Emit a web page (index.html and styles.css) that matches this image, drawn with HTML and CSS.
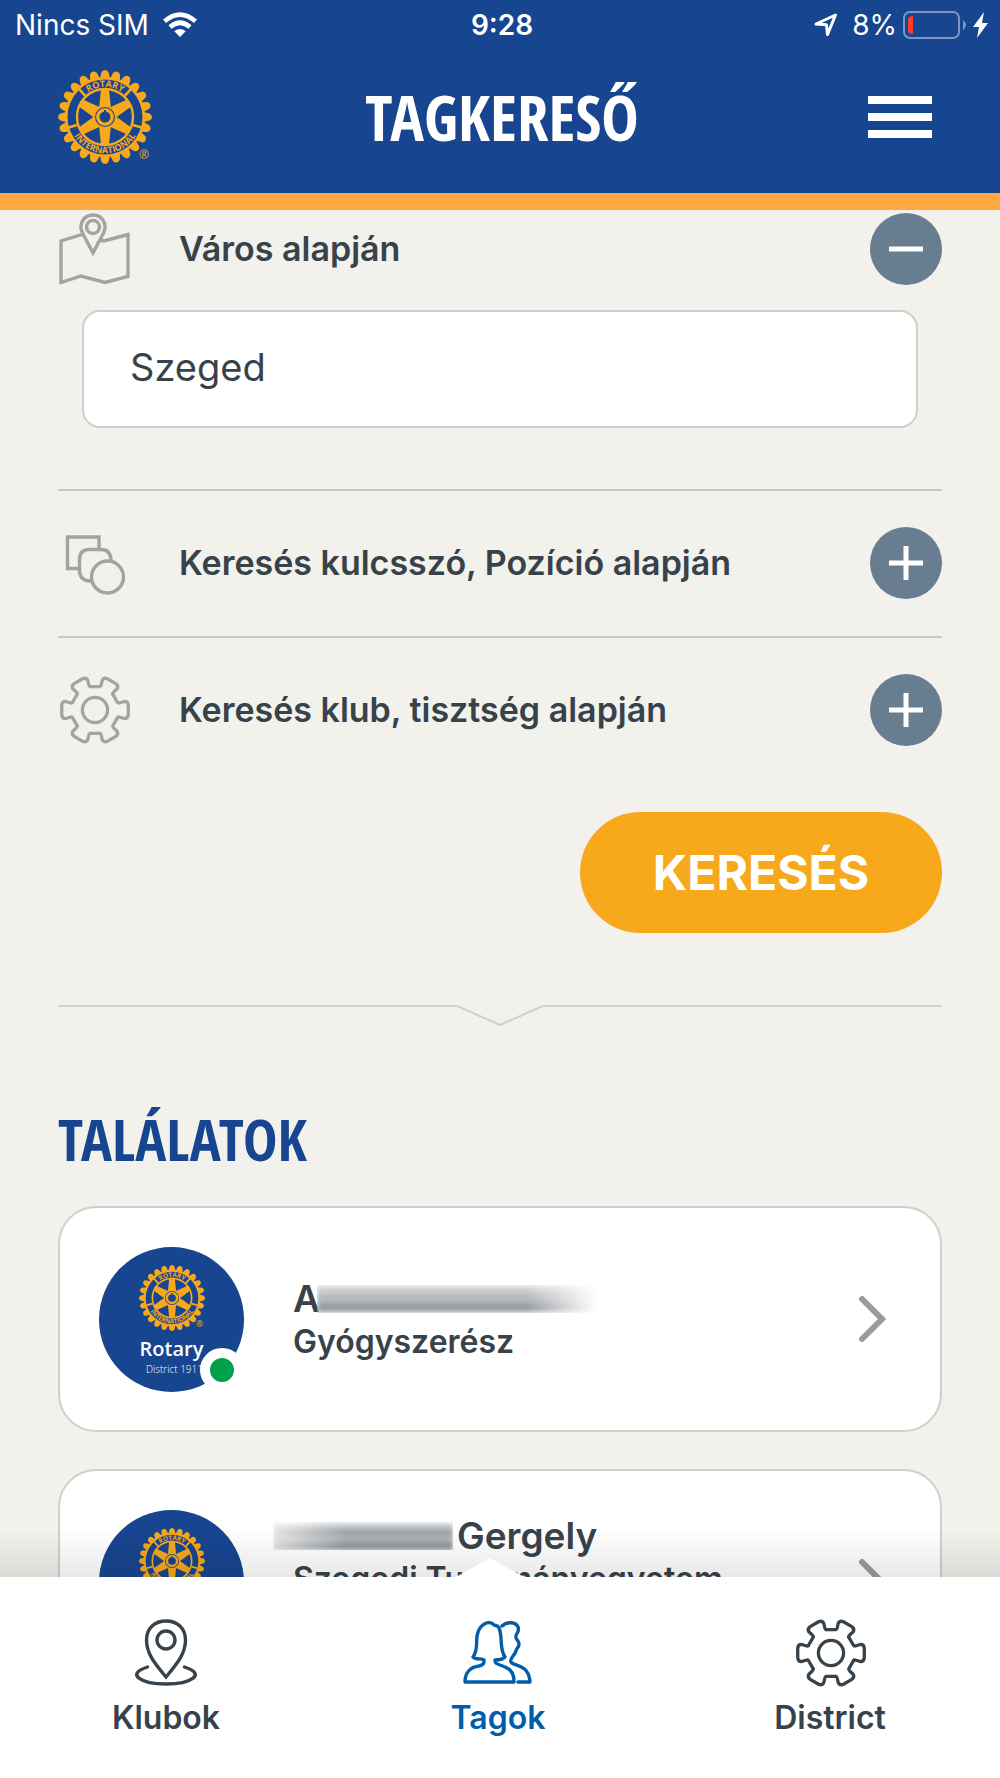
FILE: index.html
```html
<!DOCTYPE html>
<html lang="hu">
<head>
    <meta charset="UTF-8">
    <meta name="viewport" content="width=device-width, initial-scale=1.0">
    <title>Tagkereső</title>
    <link rel="stylesheet" href="styles.css">
</head>
<body>
    <svg class="sprite" aria-hidden="true">
        <defs>
            <path id="tooth" d="M-5.2 -38 L-3.6 -44.5 Q-2.5 -47 0 -47 Q2.5 -47 3.6 -44.5 L5.2 -38 Z"/>
            <g id="teeth">
                <use href="#tooth"/>
                <use href="#tooth" transform="rotate(15)"/>
                <use href="#tooth" transform="rotate(30)"/>
                <use href="#tooth" transform="rotate(45)"/>
            </g>
            <path id="spoke" d="M-6 -8 L-4 -28 H4 L6 -8 Z"/>
            <path id="arc-top" d="M-30 0 A30 30 0 0 1 30 0"/>
            <path id="arc-bottom" d="M-34.5 -10 A36 36 0 1 0 34.5 -10"/>
            <path id="gear-part" d="M18.3 -16.3 L23.3 -7.7 Q24 -6.8 26 -7.5 L30 -8.8 Q34 -9 34.3 -5 V5 Q34 9 30 8.8 L26 7.5 Q24 6.8 23.3 7.7"/>
        </defs>

        <symbol id="wheel" viewBox="-47 -47 94 94">
            <g fill="#f7a81b">
                <use href="#teeth"/>
                <use href="#teeth" transform="rotate(60)"/>
                <use href="#teeth" transform="rotate(120)"/>
                <use href="#teeth" transform="rotate(180)"/>
                <use href="#teeth" transform="rotate(240)"/>
                <use href="#teeth" transform="rotate(300)"/>
                <circle r="40"/>
            </g>
            <circle r="37.5" fill="#17458f"/>
            <circle r="28" fill="none" stroke="#f7a81b" stroke-width="2.4"/>
            <g fill="#f7a81b">
                <use href="#spoke"/>
                <use href="#spoke" transform="rotate(60)"/>
                <use href="#spoke" transform="rotate(120)"/>
                <use href="#spoke" transform="rotate(180)"/>
                <use href="#spoke" transform="rotate(240)"/>
                <use href="#spoke" transform="rotate(300)"/>
            </g>
            <circle r="10" fill="#17458f"/>
            <circle r="7.2" fill="none" stroke="#f7a81b" stroke-width="3.4"/>
            <rect x="-1" y="-7" width="2" height="2" fill="#17458f"/>
            <g stroke="#f7a81b" stroke-width="2.6">
                <path d="M0 -29 V-38" transform="rotate(43)"/>
                <path d="M0 -29 V-38" transform="rotate(-43)"/>
                <path d="M0 -29 V-38" transform="rotate(106)"/>
                <path d="M0 -29 V-38" transform="rotate(-106)"/>
            </g>
            <g class="wheel-text">
                <text><textPath href="#arc-top" startOffset="50%">ROTARY</textPath></text>
                <text><textPath href="#arc-bottom" startOffset="50%">INTERNATIONAL</textPath></text>
                <text class="wheel-reg" x="39" y="42">®</text>
            </g>
        </symbol>

        <symbol id="gear" viewBox="0 0 72 72">
            <g transform="translate(37 36) scale(0.97)" fill="none" stroke="currentColor" stroke-width="3.4" stroke-linecap="round" stroke-linejoin="round">
                <use href="#gear-part"/>
                <use href="#gear-part" transform="rotate(60)"/>
                <use href="#gear-part" transform="rotate(120)"/>
                <use href="#gear-part" transform="rotate(180)"/>
                <use href="#gear-part" transform="rotate(240)"/>
                <use href="#gear-part" transform="rotate(300)"/>
                <circle r="13"/>
            </g>
        </symbol>
    </svg>

    <header class="header">
        <div class="status">
            <div class="status-left">
                <span>Nincs SIM</span>
                <svg width="34" height="26" viewBox="0 0 34 26" fill="none" stroke="#fff" stroke-width="4.6">
                    <path d="M1.5 9.3 Q17 -4 32.5 9.3"/>
                    <path d="M7 15 Q17 6.5 27 15"/>
                    <path d="M17 25 L11.3 19.2 Q17 14.6 22.7 19.2 Z" fill="#fff" stroke="none"/>
                </svg>
            </div>
            <span class="clock">9:28</span>
            <div class="status-right">
                <svg width="24" height="24" viewBox="0 0 24 24" fill="none" stroke="#fff" stroke-width="3" stroke-linejoin="round">
                    <path d="M2 11 L21.5 2 L13.5 21.5 L12.5 11.8 Z"/>
                </svg>
                <span class="percent">8%</span>
                <svg class="battery" width="64" height="28" viewBox="0 0 64 28">
                    <rect x="1" y="1" width="55" height="26" rx="6" fill="none" stroke="#7d95c2" stroke-width="2"/>
                    <path d="M5 9 Q5 5 10 5 V23 Q5 23 5 19 Z" fill="#ff3b30"/>
                    <path d="M60 9 Q66 14 60 19 Z" fill="#7d95c2"/>
                </svg>
                <svg width="16" height="26" viewBox="0 0 16 26">
                    <path d="M11 0 L0 15 H6 L4 26 L15 11 H9 Z" fill="#fff"/>
                </svg>
            </div>
        </div>
        <div class="header-main">
            <svg class="logo"><use href="#wheel"/></svg>
            <h1>TAGKERESŐ</h1>
            <button class="menu" aria-label="Menü">
                <span></span>
                <span></span>
                <span></span>
            </button>
        </div>
    </header>

    <main>
        <form onsubmit="return false">
            <div class="row row-first">
                <svg class="row-icon" viewBox="0 0 72 72" fill="none" stroke="#a3a3a3" stroke-width="3.4">
                    <path d="M24 21.5 L3 28 V69.5 L23 63 L47 69.5 L70 63.5 V21.5 L46 28 L42 27"/>
                    <path d="M35 40 L24.5 20 C20 11 26 2 35 2 C44 2 50 11 45.5 20 Z"/>
                    <circle cx="35" cy="14" r="6.5"/>
                </svg>
                <label class="row-title" for="varos">Város alapján</label>
                <button type="button" class="toggle" aria-label="Bezárás">
                    <svg width="34" height="34"><path d="M0 17 H34"/></svg>
                </button>
            </div>
            <div class="field">
                <input type="text" id="varos" value="Szeged">
            </div>

            <div class="row">
                <svg class="row-icon" viewBox="0 0 72 72" fill="none" stroke="#a3a3a3" stroke-width="3.4">
                    <path d="M41 22 V10 H9.5 V41.5 H21"/>
                    <path d="M34 54 H31 Q21.5 53 21.5 43 V33 Q21.5 22.5 31 22.5 H43 Q53 22.5 53 34"/>
                    <circle cx="49.5" cy="50" r="16"/>
                </svg>
                <span class="row-title">Keresés kulcsszó, Pozíció alapján</span>
                <button type="button" class="toggle" aria-label="Megnyitás">
                    <svg width="34" height="34"><path d="M0 17 H34 M17 0 V34"/></svg>
                </button>
            </div>

            <div class="row">
                <svg class="row-icon"><use href="#gear"/></svg>
                <span class="row-title">Keresés klub, tisztség alapján</span>
                <button type="button" class="toggle" aria-label="Megnyitás">
                    <svg width="34" height="34"><path d="M0 17 H34 M17 0 V34"/></svg>
                </button>
            </div>

            <button class="search">KERESÉS</button>
        </form>

        <div class="divider">
            <svg width="86" height="21" viewBox="0 0 86 21" fill="none" stroke="#cfcfcf" stroke-width="2">
                <path d="M0 1 L43 20 L86 1"/>
            </svg>
        </div>

        <h2>TALÁLATOK</h2>

        <a class="card" href="#">
            <div class="avatar">
                <svg class="avatar-wheel"><use href="#wheel"/></svg>
                <span class="avatar-name">Rotary</span>
                <span class="avatar-district">District 1911</span>
                <span class="online"></span>
            </div>
            <div class="info">
                <div class="name">A<span class="smudge smudge-long"></span></div>
                <div class="job">Gyógyszerész</div>
            </div>
            <svg class="chevron" width="30" height="48" viewBox="0 0 30 48"><path d="M4 4 L24 24 L4 44"/></svg>
        </a>

        <a class="card" href="#">
            <div class="avatar">
                <svg class="avatar-wheel"><use href="#wheel"/></svg>
                <span class="avatar-name">Rotary</span>
                <span class="avatar-district">District 1911</span>
                <span class="online"></span>
            </div>
            <div class="info">
                <div class="name"><span class="smudge smudge-short"></span>Gergely</div>
                <div class="job job-long">Szegedi Tudományegyetem</div>
            </div>
            <svg class="chevron" width="30" height="48" viewBox="0 0 30 48"><path d="M4 4 L24 24 L4 44"/></svg>
        </a>
    </main>

    <nav class="tabs">
        <a href="#">
            <svg width="68" height="72" viewBox="0 0 68 72" fill="none" stroke="currentColor" stroke-width="3.4" stroke-linecap="round">
                <path d="M34 60 C25 49 14.5 38 14.5 23 C14.5 11 23 4 34 4 C45 4 53.5 11 53.5 23 C53.5 38 43 49 34 60 Z"/>
                <circle cx="34" cy="23" r="9"/>
                <path d="M15.5 50 C-7 57 9 67 34 67 C59 67 75 57 52.5 50"/>
            </svg>
            <span>Klubok</span>
        </a>
        <a href="#" class="active">
            <svg width="72" height="72" viewBox="0 0 72 72" fill="none" stroke="currentColor" stroke-width="3.4" stroke-linecap="round" stroke-linejoin="round">
                <path d="M3 65 H52 C52 54 47 51 38 48 C33 46 33 46 33 43 C38 43 42 41 43 40 C37 32 41 20 37 11 C36 8 34 9 32 8 C28 3 17 6 15 19 C14 27 16 33 11 40 C13 43 20 41 22 43 C22 46 22 48 17 49 C8 50 3 56 3 65 Z"/>
                <path d="M40 9 C45 4 54 5 56 10 C58 15 54 16 54 19 C53 23 57 23 57 27 C57 31 54 31 54 34 C53 38 47 42 49 45 C50 49 67 46 68 65 H56"/>
            </svg>
            <span>Tagok</span>
        </a>
        <a href="#">
            <svg width="72" height="72"><use href="#gear"/></svg>
            <span>District</span>
        </a>
    </nav>
</body>
</html>
```

FILE: styles.css
```css
* {
    box-sizing: border-box;
}
body {
    margin: 0;
    height: 100vh;
    display: flex;
    flex-direction: column;
    font-family: Inter, "Liberation Sans", sans-serif;
    color: #37424a;
    background-color: #f2f1ec;
}
svg {
    display: block;
    flex: none;
}
.sprite {
    display: none;
}
.wheel-text {
    fill: #f7a81b;
    font-family: "Open Sans", sans-serif;
    font-size: 9px;
    font-weight: 700;
    text-anchor: middle;
}
.wheel-reg {
    font-size: 12px;
    font-weight: 400;
}

/* header */
.header {
    flex: none;
    background-color: #17458f;
    border-bottom: 17px solid #ffa940;
    color: white;
}
.status {
    display: grid;
    grid-template-columns: 1fr auto 1fr;
    align-items: center;
    height: 50px;
    padding: 0 11px 0 15px;
    font-size: 28px;
}
.status-left, .status-right {
    display: flex;
    align-items: center;
}
.status-left {
    gap: 14px;
}
.status-right {
    justify-content: flex-end;
}
.clock {
    font-weight: 600;
}
.percent {
    margin: 0 6px 0 14px;
}
.battery {
    margin-right: 6px;
}
.header-main {
    display: grid;
    grid-template-columns: 1fr auto 1fr;
    align-items: center;
    height: 143px;
    padding: 0 58px 10px;
}
.logo {
    width: 94px;
    height: 94px;
    overflow: visible;
}
h1, h2 {
    margin: 0;
    font-family: "Open Sans Condensed", "Roboto Condensed", "Liberation Sans Narrow", "Open Sans", sans-serif;
    font-weight: 700;
}
h1 {
    padding-left: 4px;
    font-size: 63px;
    line-height: 72px;
}
button {
    padding: 0;
    border: none;
    cursor: pointer;
}
.menu {
    justify-self: end;
    display: flex;
    flex-direction: column;
    gap: 9px;
    width: 64px;
    margin-right: 10px;
    background: none;
}
.menu span {
    height: 8px;
    background-color: white;
}

/* search form */
main {
    flex: 1;
    min-height: 0;
    padding: 3px 58px 0;
    overflow-y: auto;
    scrollbar-width: none;
}
.row {
    display: flex;
    align-items: center;
    padding: 36px 0 37px;
    border-top: 2px solid #c8c8c8;
}
.row-first {
    padding: 0;
    border-top: none;
}
.row-icon {
    width: 72px;
    height: 72px;
    color: #a3a3a3;
}
.row-title {
    flex: 1;
    margin-left: 49px;
    padding-bottom: 2px;
    font-size: 34px;
    font-weight: 600;
}
.toggle {
    display: flex;
    align-items: center;
    justify-content: center;
    width: 72px;
    height: 72px;
    border-radius: 50%;
    background-color: #687d90;
    stroke: white;
    stroke-width: 5px;
}
.field {
    padding: 25px 24px 61px;
}
.field input {
    display: block;
    width: 100%;
    height: 118px;
    padding: 0 46px 5px;
    border: 2px solid #cfcfcf;
    border-radius: 18px;
    background-color: white;
    font-family: inherit;
    font-size: 38px;
    color: #37424a;
}
.search {
    display: block;
    width: 362px;
    height: 121px;
    margin: 29px 0 0 auto;
    border-radius: 61px;
    background-color: #f7a81b;
    font-family: inherit;
    font-size: 48px;
    font-weight: 700;
    color: white;
}
.divider {
    display: flex;
    margin-top: 72px;
}
.divider::before, .divider::after {
    content: "";
    flex: 1;
    height: 2px;
    background-color: #cfcfcf;
}

/* results */
h2 {
    margin: 76px 0 30px;
    font-size: 58px;
    line-height: 74px;
    color: #17458f;
}
.card {
    display: flex;
    align-items: center;
    height: 226px;
    margin-bottom: 37px;
    padding: 0 52px 0 39px;
    border: 2px solid #cfcfcf;
    border-radius: 38px;
    background-color: white;
    color: inherit;
    text-decoration: none;
}
.avatar {
    position: relative;
    display: flex;
    flex: none;
    flex-direction: column;
    align-items: center;
    width: 145px;
    height: 145px;
    padding-top: 18px;
    border-radius: 50%;
    background-color: #17458f;
    color: white;
    font-family: "Open Sans", sans-serif;
}
.avatar-wheel {
    width: 66px;
    height: 66px;
    overflow: visible;
}
.avatar-name {
    margin-top: 5px;
    font-size: 20px;
    font-weight: 600;
    line-height: 26px;
}
.avatar-district {
    margin-left: 6px;
    font-size: 10px;
    font-weight: 300;
    line-height: 14px;
}
.online {
    position: absolute;
    right: 0;
    bottom: 0;
    width: 44px;
    height: 44px;
    border: 10px solid white;
    border-radius: 50%;
    background-color: #00a14b;
}
.info {
    flex: 1;
    margin-left: 49px;
    padding-top: 2px;
    font-weight: 600;
    white-space: nowrap;
}
.name {
    display: flex;
    align-items: center;
    font-size: 37px;
    line-height: 42px;
}
.smudge {
    height: 28px;
    filter: blur(2px);
}
.smudge-long {
    width: 280px;
    margin-left: -3px;
    background: linear-gradient(to bottom, #e4e5e6, #c0c3c6 30%, #b0b3b7 60%, #8d9298 80%, #c4c6c8);
    mask-image: linear-gradient(to right, black 75%, transparent);
}
.smudge-short {
    width: 180px;
    margin: 0 4px 0 -20px;
    background: linear-gradient(to bottom, #e8e9ea, #9a9fa3 35%, #b4b7ba 60%, #888e93 90%);
    mask-image: linear-gradient(to right, rgba(0, 0, 0, 0.3), black 40%);
}
.job {
    font-size: 32px;
    line-height: 43px;
}
.job-long {
    min-height: 94px;
}
.chevron {
    fill: none;
    stroke: #9b9b9b;
    stroke-width: 6px;
    stroke-linecap: round;
}

/* bottom tabs */
.tabs {
    position: relative;
    display: grid;
    grid-template-columns: repeat(3, 1fr);
    flex: none;
    height: 201px;
    padding: 40px 4px 0 0;
    background-color: white;
    font-size: 32px;
    font-weight: 600;
    line-height: 40px;
}
.tabs::before {
    content: "";
    position: absolute;
    left: 0;
    right: 0;
    bottom: 100%;
    height: 48px;
    background: linear-gradient(to top, rgba(0, 0, 0, 0.09), transparent);
}
.tabs::after {
    content: "";
    position: absolute;
    left: 49%;
    bottom: 100%;
    width: 68px;
    height: 19px;
    margin-left: -34px;
    background-color: white;
    clip-path: polygon(50% 0, 100% 100%, 0 100%);
}
.tabs a {
    display: flex;
    flex-direction: column;
    align-items: center;
    gap: 9px;
    color: #37424a;
    text-decoration: none;
}
.tabs .active {
    color: #005daa;
}
```
